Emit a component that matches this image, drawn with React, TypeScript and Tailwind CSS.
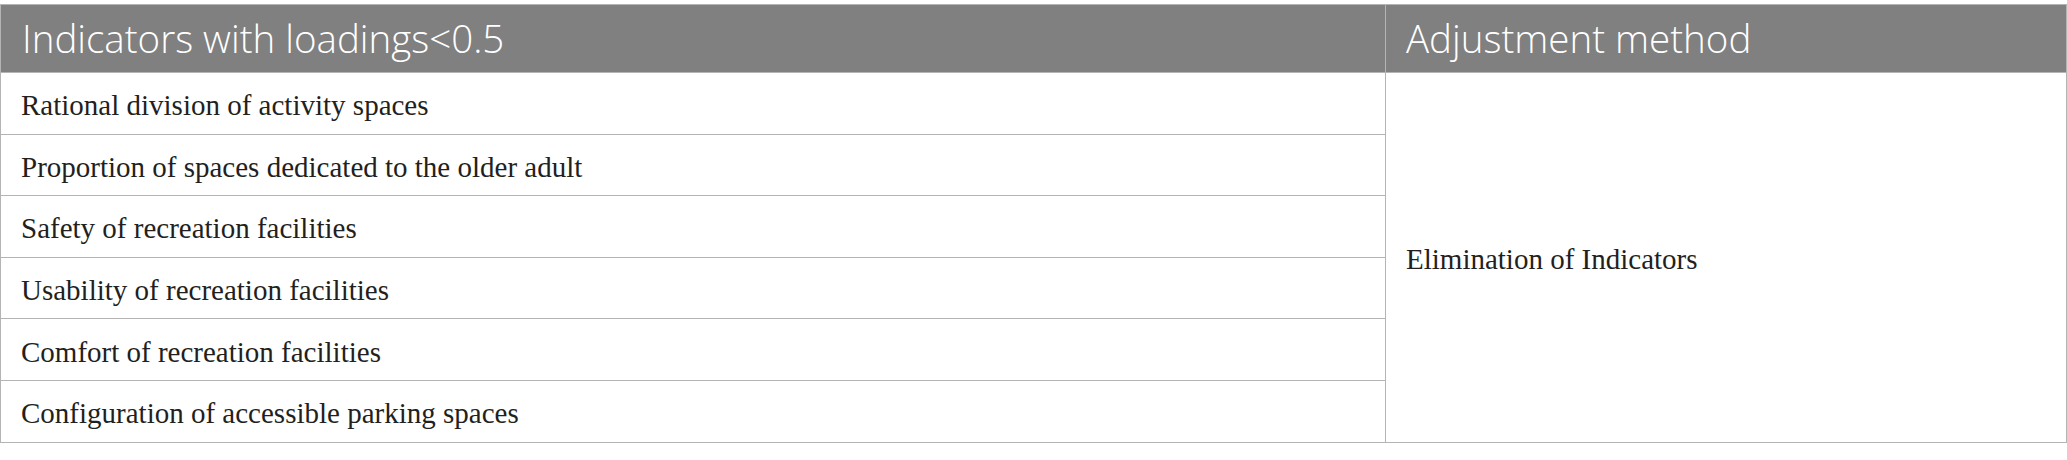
const ROWS = [
  'Rational division of activity spaces',
  'Proportion of spaces dedicated to the older adult',
  'Safety of recreation facilities',
  'Usability of recreation facilities',
  'Comfort of recreation facilities',
  'Configuration of accessible parking spaces',
]

export default function App() {
  return (
    <div className="w-[2067px] h-[460px] bg-white pt-[4px]">
      <table className="w-full border-collapse table-fixed">
        <colgroup>
          <col className="w-[1385px]" />
          <col />
        </colgroup>
        <thead>
          <tr className="h-[68px] bg-[#7f807f]">
            <th className="border border-[#b4b4b4] px-[21px] text-left align-middle font-['Open_Sans',sans-serif] font-light text-[38.5px] leading-none text-white">
              Indicators with loadings&lt;0.5
            </th>
            <th className="border border-[#b4b4b4] px-[20px] text-left align-middle font-['Open_Sans',sans-serif] font-light text-[38.5px] leading-none text-white">
              Adjustment method
            </th>
          </tr>
        </thead>
        <tbody className="font-['Liberation_Serif',serif] text-[29px] leading-none text-[#231f20]">
          {ROWS.map((r, i) => (
            <tr key={r} className="h-[61.6px]">
              <td className="border border-[#b4b4b4] px-[20px] pt-[5px] align-middle">{r}</td>
              {i === 0 && (
                <td rowSpan={6} className="border border-[#b4b4b4] px-[20px] pt-[5px] align-middle">
                  Elimination of Indicators
                </td>
              )}
            </tr>
          ))}
        </tbody>
      </table>
    </div>
  )
}
